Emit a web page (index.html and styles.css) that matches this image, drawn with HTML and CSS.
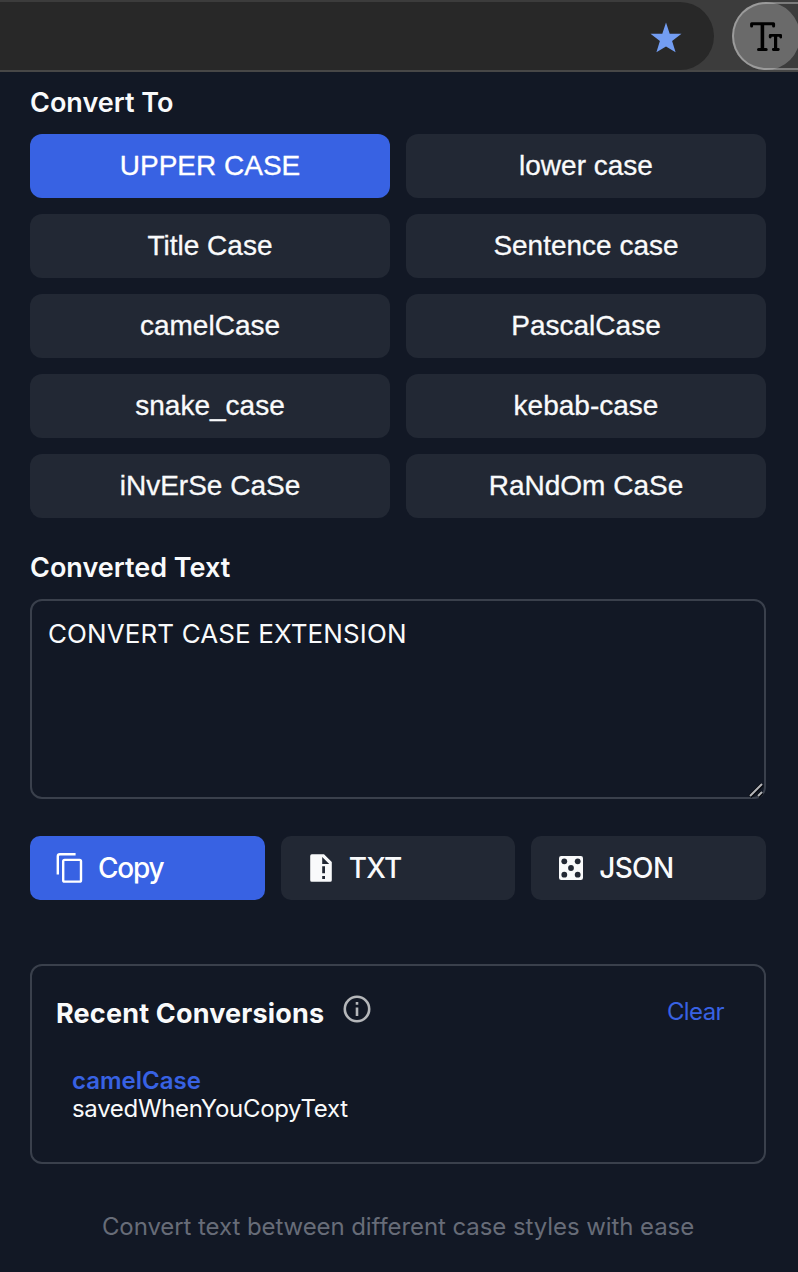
FILE: index.html
```html
<!DOCTYPE html>
<html lang="en">
<head>
<meta charset="utf-8">
<title>Convert Case</title>
<link rel="stylesheet" href="styles.css">
</head>
<body>
<header class="toolbar">
  <div class="omnibox">
    <svg class="star" width="32" height="32" viewBox="0 0 32 32"><path d="M16 .5l3.7 11.2 11.8.1-9.4 7.1 3.5 11.3L16 24.500l-9.6 5.700 3.5-11.3L.5 11.8l11.8-.1z"/></svg>
  </div>
  <div class="ext-pill">
    <div class="ext-button">
      <svg width="32" height="30" viewBox="0 0 32 30" fill="none" stroke="#000"><path stroke-width="3" stroke-linecap="round" stroke-linejoin="round" d="M1.6 4V1.800h22V4M8.500 27.500h7.700"/><path stroke-width="3.6" d="M12.4 2v25"/><path stroke-width="2.800" stroke-linecap="round" stroke-linejoin="round" d="M20.2 15v-1.600h10.5V15M23.300 27.500h5"/><path stroke-width="3.2" d="M25.6 13.6v13"/></svg>
    </div>
  </div>
</header>
<main class="popup">
  <h2 class="label label-convert">Convert To</h2>
  <div class="cases">
    <button class="case active">UPPER CASE</button>
    <button class="case">lower case</button>
    <button class="case">Title Case</button>
    <button class="case">Sentence case</button>
    <button class="case">camelCase</button>
    <button class="case">PascalCase</button>
    <button class="case">snake_case</button>
    <button class="case">kebab-case</button>
    <button class="case">iNvErSe CaSe</button>
    <button class="case">RaNdOm CaSe</button>
  </div>
  <h2 class="label label-output">Converted Text</h2>
  <div class="output"><span class="output-text">CONVERT CASE EXTENSION</span>
    <svg class="grip" width="16" height="16" viewBox="0 0 16 16"><path stroke="#05070c" stroke-width="4" d="M2 14.5L14 2.500M10 14.5l4-4"/><path stroke="#b4b5b8" stroke-width="2" d="M2 14L14 2M10 14l4-4"/></svg>
  </div>
  <div class="actions">
    <button class="action primary">
      <svg width="28" height="32" viewBox="0 0 28 32" fill="none" stroke="#fff" stroke-width="2.400"><path d="M1.800 22.500V4.200Q1.800 2.200 3.800 2.200H19.600"/><rect x="7.200" y="7.900" width="17.800" height="21.700" rx="1.400"/></svg>
      <span class="copy-text">Copy</span>
    </button>
    <button class="action">
      <svg class="file" width="22" height="28" viewBox="0 0 22 28"><path fill="#f9fafb" fill-rule="evenodd" d="M1.8.3H14L21.8 8v18.2q0 1.6-1.6 1.6H1.8Q.2 27.800.2 26.200V1.900Q.2.3 1.8.3zM12.200 3v7h7zM12.200 12.300v7h2.800v-7zM12.200 22v3h2.800v-3z"/></svg>
      <span class="file-text">TXT</span>
    </button>
    <button class="action">
      <svg class="dice" width="24" height="24" viewBox="0 0 24 24"><rect width="24" height="24" rx="2.2" fill="#f9fafb"/><g fill="#222834"><circle cx="5.300" cy="5.300" r="2.900"/><circle cx="18.700" cy="5.300" r="2.900"/><circle cx="12" cy="12" r="2.900"/><circle cx="5.300" cy="18.700" r="2.900"/><circle cx="18.700" cy="18.700" r="2.900"/></g></svg>
      <span class="file-text">JSON</span>
    </button>
  </div>
  <section class="recent">
    <div class="recent-head">
      <h3 class="recent-title">Recent Conversions</h3>
      <svg class="info" width="28" height="28" viewBox="0 0 28 28"><circle cx="14" cy="14" r="12.200" fill="none" stroke="#b5b7ba" stroke-width="2.600"/><path fill="#b5b7ba" d="M12.700 7h2.600v2.700h-2.600zM12.700 12.500h2.600V21h-2.600z"/></svg>
      <a class="clear">Clear</a>
    </div>
    <div class="entry">
      <div class="entry-type">camelCase</div>
      <div class="entry-text">savedWhenYouCopyText</div>
    </div>
  </section>
  <footer class="footer"><span class="footer-text">Convert text between different case styles with ease</span></footer>
</main>
</body>
</html>
```
FILE: styles.css
```css
* { box-sizing: border-box; }
body { margin: 0; background: #121825; color: #f9fafb; font-family: Inter, sans-serif; }
h2, h3 { margin: 0; }
button { border: 0; padding: 0; color: #f9fafb; }
svg { display: block; flex: none; }
.toolbar { height: 72px; padding-top: 2px; display: flex; justify-content: space-between; background: #3c3c3c; border-bottom: 2px solid #474747; overflow: hidden; }
.omnibox { width: 714px; height: 68px; border-radius: 0 34px 34px 0; background: #282828; display: flex; justify-content: flex-end; padding: 20px 32px 0 0; }
.star { fill: #739df2; }
.ext-pill { width: 66px; height: 68px; border: 2px solid #7c7c7c; border-right: 0; border-radius: 34px 0 0 34px; }
.ext-button { width: 68px; height: 68px; margin: -2px; border-radius: 50%; background: rgba(255,255,255,.24); padding: 20px 0 0 18px; }
.popup { height: 1200px; padding: 0 32px 0 30px; }
.label { font-size: 27px; font-weight: 600; line-height: 32px; white-space: nowrap; }
.label-convert { padding-top: 15px; height: 62px; }
.label-output { margin-top: 34px; height: 47px; }
.cases { display: grid; grid-template-columns: 1fr 1fr; gap: 16px; }
.case { height: 64px; border-radius: 12px; background: #222834; font: 28px "Liberation Sans", Arial, sans-serif; -webkit-text-stroke: .3px currentColor; }
.case.active, .action.primary { background: #3862e3; color: #fff; }
.output { position: relative; height: 200px; border: 2px solid #3a404c; border-radius: 12px; padding: 17px 16px; font-size: 26px; line-height: 32px; letter-spacing: .1px; }
.grip { position: absolute; right: 0; bottom: -1px; }
.actions { display: grid; grid-template-columns: repeat(3, 1fr); gap: 16px; margin-top: 37px; }
.action { height: 64px; display: flex; align-items: center; gap: 14px; padding-left: 26px; border-radius: 10px; background: #222834; font: 450 28px/32px Inter, sans-serif; }
.copy-text { letter-spacing: -1.2px; }
.file-text { letter-spacing: -.7px; }
.file { margin: 0 3px; }
.dice { margin: 0 2px; }
.recent { margin-top: 64px; height: 200px; border: 2px solid #3a404c; border-radius: 12px; padding: 29px 40px 0 24px; }
.recent-head { display: flex; height: 36px; }
.recent-title { padding-top: 1px; font-size: 27px; line-height: 36px; font-weight: 700; letter-spacing: .18px; white-space: nowrap; }
.info { margin-left: 19px; }
.clear { margin-left: auto; color: #3862e3; font-size: 24px; line-height: 34px; letter-spacing: -.6px; }
.entry { padding: 36px 0 0 16px; font-size: 24px; line-height: 28px; }
.entry-type { color: #3862e3; font-weight: 600; }
.entry-text { letter-spacing: -.32px; }
.footer { margin-top: 47px; text-align: center; font-size: 24px; line-height: 32px; letter-spacing: -.08px; color: #676c78; white-space: nowrap; }
```
